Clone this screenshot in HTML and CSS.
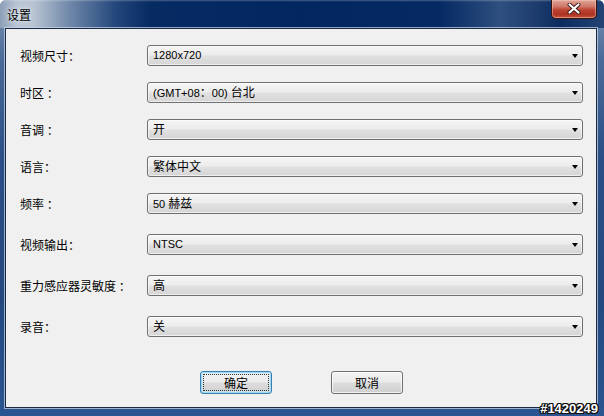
FILE: index.html
```html
<!DOCTYPE html>
<html lang="zh-CN">
<head>
<meta charset="utf-8">
<title>设置</title>
<link rel="stylesheet" href="styles.css">
</head>
<body>
<div class="window">
  <div class="titlebar">
    <span class="title">设置</span>
    <button class="close" aria-label="关闭">
      <svg width="14" height="11" viewBox="0 0 14 11">
        <path d="M2.5 1.5 L11.5 9.5 M11.5 1.5 L2.5 9.5" stroke="#3a1a1a" stroke-width="4" stroke-linecap="round"/>
        <path d="M2.5 1.5 L11.5 9.5 M11.5 1.5 L2.5 9.5" stroke="#ffffff" stroke-width="2.2" stroke-linecap="round"/>
      </svg>
    </button>
  </div>
  <div class="client">
    <div class="rows">
      <div class="row"><span class="label">视频尺寸：</span><div class="combo"><span class="value">1280x720</span><span class="arrow"></span></div></div>
      <div class="row"><span class="label">时区 ：</span><div class="combo"><span class="value">(GMT+08<span class="cjk">：</span>00) <span class="cjk">台北</span></span><span class="arrow"></span></div></div>
      <div class="row"><span class="label">音调 ：</span><div class="combo"><span class="value"><span class="cjk">开</span></span><span class="arrow"></span></div></div>
      <div class="row"><span class="label">语言：</span><div class="combo"><span class="value"><span class="cjk">繁体中文</span></span><span class="arrow"></span></div></div>
      <div class="row"><span class="label">频率 ：</span><div class="combo"><span class="value">50 <span class="cjk">赫兹</span></span><span class="arrow"></span></div></div>
    </div>
    <div class="rows rows-wide">
      <div class="row"><span class="label">视频输出：</span><div class="combo"><span class="value">NTSC</span><span class="arrow"></span></div></div>
      <div class="row"><span class="label">重力感应器灵敏度 ：</span><div class="combo"><span class="value"><span class="cjk">高</span></span><span class="arrow"></span></div></div>
      <div class="row"><span class="label">录音：</span><div class="combo"><span class="value"><span class="cjk">关</span></span><span class="arrow"></span></div></div>
    </div>
    <div class="buttons">
      <button class="btn btn-default">确定</button>
      <button class="btn">取消</button>
    </div>
  </div>
  <span class="watermark">#1420249</span>
</div>
</body>
</html>
```
FILE: styles.css
```css
html, body {
  margin: 0;
  padding: 0;
  background: #ffffff;
}

body {
  font-family: "Liberation Sans", "Noto Sans CJK SC", sans-serif;
  font-size: 12px;
  color: #000;
}

.window {
  position: relative;
  width: 604px;
  height: 416px;
  display: flex;
  flex-direction: column;
  overflow: hidden;
  border-radius: 6px 6px 0 0;
  background: linear-gradient(180deg, #7f95b5 0px, #4a6a98 60px, #2a4f86 160px, #23497f 300px, #2b5590 100%);
}

.titlebar {
  height: 28px;
  flex: none;
  display: flex;
  align-items: flex-start;
  padding: 0 7px 0 7px;
  background:
    linear-gradient(180deg, rgba(255,255,255,0.25) 0, rgba(255,255,255,0) 2px),
    linear-gradient(90deg, #8d9fb8 0px, #b9c5d4 18px, #b7c3d2 34px, #6f87a9 70px, #24487c 115px, #062a62 150px, #022660 300px, #052a63 440px, #2e4f7f 500px, #1e3d6e 535px, #0c2c60 560px, #234374 604px);
}

.title {
  align-self: center;
  margin-top: 1px;
  font-family: "Noto Sans CJK SC", sans-serif;
  font-size: 12px;
  color: #000;
  text-shadow: 0 0 6px #e9eef4, 0 0 3px #e9eef4;
}

.close {
  margin-left: auto;
  width: 46px;
  height: 19px;
  padding: 0;
  border: 1px solid #3b1410;
  border-top: none;
  border-radius: 0 0 5px 5px;
  display: flex;
  align-items: center;
  justify-content: center;
  background: linear-gradient(180deg, #dfa597 0%, #cf7a6c 35%, #bd4332 55%, #ad3322 80%, #c4553f 100%);
  box-shadow: inset 0 0 0 1px rgba(255, 210, 200, 0.45);
}

.close svg {
  display: block;
  margin-top: -1px;
}

.client {
  flex: 1;
  margin: 0 7px 8px 5px;
  border: 1px solid #1b2a44;
  box-shadow: 0 0 0 1px rgba(205, 218, 236, 0.7);
  background: #f0f0f0;
  padding: 16px 13px 0 14px;
  display: flex;
  flex-direction: column;
}

.rows {
  display: flex;
  flex-direction: column;
  gap: 16px;
}

.rows-wide {
  gap: 20px;
  margin-top: 20px;
}

.row {
  display: flex;
  align-items: center;
  height: 21px;
}

.label {
  width: 127px;
  flex: none;
  font-family: "Noto Sans CJK SC", sans-serif;
  font-size: 12px;
  white-space: pre;
}

.combo {
  flex: 1;
  height: 21px;
  box-sizing: border-box;
  border: 1px solid #707070;
  border-radius: 3px;
  background: linear-gradient(180deg, #f5f5f5 0%, #ededed 45%, #e0e0e0 55%, #d5d5d5 100%);
  box-shadow: inset 0 0 0 1px rgba(255, 255, 255, 0.6);
  display: flex;
  align-items: center;
  padding: 0 4px 0 5px;
}

.value {
  flex: 1;
  font-family: "Liberation Sans", "Noto Sans CJK SC", sans-serif;
  font-size: 11px;
  line-height: 19px;
  white-space: pre;
}

.cjk {
  font-family: "Noto Sans CJK SC", sans-serif;
  font-size: 12px;
}

.arrow {
  flex: none;
  width: 0;
  height: 0;
  border-left: 3.5px solid transparent;
  border-right: 3.5px solid transparent;
  border-top: 4px solid #000;
}

.buttons {
  display: flex;
  justify-content: center;
  gap: 59px;
  margin-top: 34px;
}

.btn {
  position: relative;
  width: 72px;
  height: 23px;
  padding: 0;
  box-sizing: border-box;
  border: 1px solid #707070;
  border-radius: 3px;
  background: linear-gradient(180deg, #f2f2f2 0%, #ebebeb 48%, #dddddd 52%, #cfcfcf 100%);
  box-shadow: inset 0 0 0 1px rgba(255, 255, 255, 0.7);
  font-family: "Noto Sans CJK SC", sans-serif;
  font-size: 12px;
  color: #000;
}

.btn-default {
  border-color: #3c7fb1;
  box-shadow: inset 0 0 0 1px #9fd8f3, inset 0 0 0 2px rgba(200, 235, 250, 0.6);
}

.btn-default::after {
  content: "";
  position: absolute;
  inset: 2px;
  border: 1px dotted #333;
  border-radius: 1px;
}

.watermark {
  position: absolute;
  right: 6px;
  bottom: 1px;
  font-family: "Liberation Sans", sans-serif;
  font-weight: bold;
  font-size: 13px;
  line-height: 13px;
  color: #fff;
  text-shadow: 1px 0 0 #111, -1px 0 0 #111, 0 1px 0 #111, 0 -1px 0 #111, 1px 1px 0 #111, -1px -1px 0 #111, 1px -1px 0 #111, -1px 1px 0 #111;
}
```
